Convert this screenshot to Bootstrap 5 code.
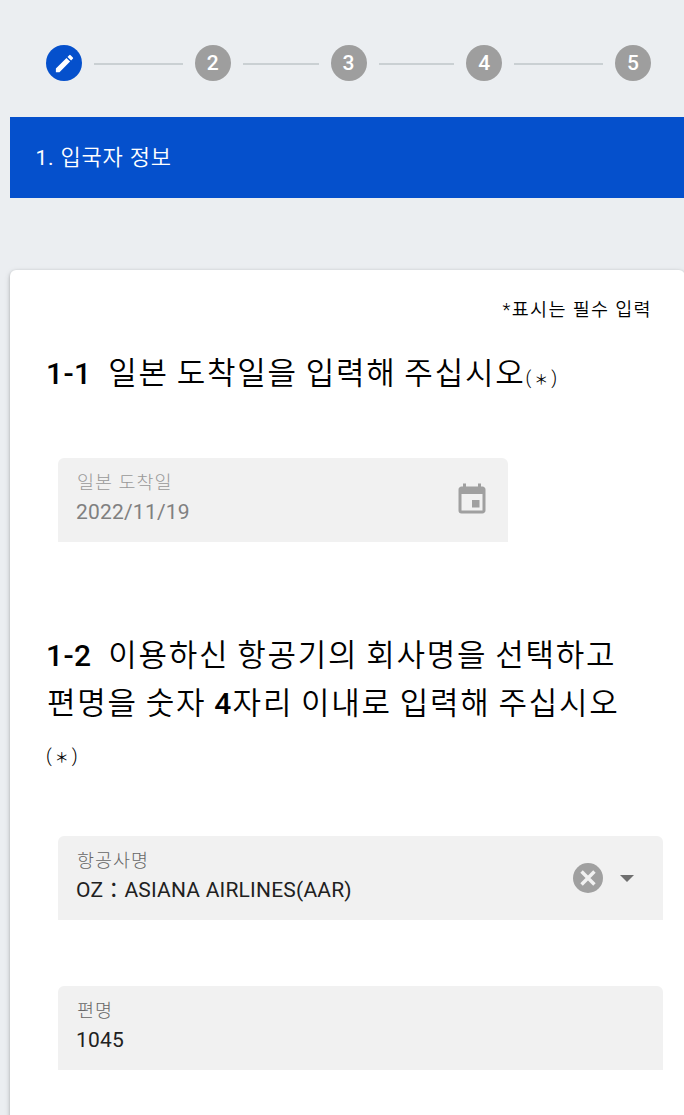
<!DOCTYPE html>
<html lang="ko">
<head>
<meta charset="utf-8">
<meta name="viewport" content="width=device-width, initial-scale=1">
<title>입국자 정보</title>
<link rel="stylesheet" href="https://cdn.jsdelivr.net/npm/bootstrap@5.3.0/dist/css/bootstrap.min.css">
<style>
  body { background: #ebeef1; font-family: Roboto, "Noto Sans CJK KR", sans-serif; color: #000; overflow: hidden; height: 1115px; }
  .steps { padding: 45px 33px 0 46px; height: 117px; }
  .step-dot { width: 36px; height: 36px; background: #9e9e9e; color: #fff; font-size: 21px; line-height: 36px; font-weight: 500; flex: none; }
  .step-dot.current { background: #0550cc; }
  .step-line { height: 2px; background: #cad0d3; margin: 1px 12px 0; flex: 76 1 0; }
  .step-line.wide { flex-grow: 89; }
  .title-bar { margin-left: 10px; height: 81px; padding: 0 25.5px; background: #0550cc; color: #fff; font-size: 21px; line-height: 81px; letter-spacing: .8px; }
  .title-bar span { font-size: 22px; font-weight: 350; }
  .form-panel { margin: 72px -1px 0 10px; height: 900px; border-radius: 6px; background: #fff; box-shadow: 0 3px 2px -2px rgba(0,0,0,.2), 0 1px 3px rgba(0,0,0,.22), 0 2px 6px rgba(0,0,0,.14); padding: 24px 22px 0 36px; }
  .required-note { height: 56px; line-height: 33px; font-size: 18.5px; font-weight: 350; letter-spacing: 1.35px; padding-right: 11px; }
  .question { font-size: 30px; line-height: 48px; letter-spacing: .4px; font-weight: 500; margin: 0 0 60px; white-space: nowrap; }
  .ko { font-size: 31px; font-weight: 350; letter-spacing: 1.75px; word-spacing: -1.4px; line-height: 1; margin-left: 1px; }
  .req { font-size: 18px; font-weight: 350; letter-spacing: 2px; line-height: 1; }
  .req i { font-style: normal; font-size: 14px; font-weight: 400; letter-spacing: 0; margin: 0 3px 0 1px; }
  .field { margin-left: 12px; height: 84px; width: 605px; background: #f1f1f1; border-radius: 6px 6px 0 0; padding: 12px 18px 0; color: #212121; }
  .field.short { width: 450px; color: #808080; }
  .field.last { margin-top: 66px; }
  .field-label { font-size: 18.5px; line-height: 27px; font-weight: 300; letter-spacing: 1px; color: #666; padding-left: 1px; }
  .short .field-label { color: #999; }
  .field-value { font-size: 21px; line-height: 31px; letter-spacing: .2px; }
  .calendar { margin-top: 12px; }
  .field-tools { height: 60px; gap: 14px; padding-right: 11px; }
  .second { margin-top: 90px; }
</style>
</head>
<body>
<header class="steps d-flex align-items-start">
  <div class="d-flex align-items-center w-100">
    <div class="step-dot current rounded-circle d-flex align-items-center justify-content-center">
      <svg width="23" height="23" viewBox="0 0 24 24" fill="#fff"><path d="M3 17.25V21h3.75L17.81 9.94l-3.75-3.75L3 17.25zM20.71 7.04a1 1 0 0 0 0-1.41l-2.34-2.34a1 1 0 0 0-1.41 0l-1.83 1.83 3.75 3.75 1.83-1.83z"/></svg>
    </div>
    <div class="step-line wide"></div>
    <div class="step-dot rounded-circle text-center">2</div>
    <div class="step-line"></div>
    <div class="step-dot rounded-circle text-center">3</div>
    <div class="step-line"></div>
    <div class="step-dot rounded-circle text-center">4</div>
    <div class="step-line wide"></div>
    <div class="step-dot rounded-circle text-center">5</div>
  </div>
</header>
<div class="title-bar">1. <span>입국자 정보</span></div>
<main class="form-panel">
  <div class="required-note text-end">*표시는 필수 입력</div>
  <section>
    <h2 class="question">1-1&nbsp; <span class="ko">일본 도착일을 입력해 주십시오</span><span class="req">(<i>＊</i>)</span></h2>
    <div class="field short d-flex justify-content-between">
      <div>
        <div class="field-label">일본 도착일</div>
        <div class="field-value">2022/11/19</div>
      </div>
      <svg class="calendar" width="36" height="36" viewBox="0 0 24 24" fill="#a0a0a0"><path d="M17 12h-5v5h5v-5zM16 1v2H8V1H6v2H5c-1.11 0-1.99.9-1.99 2L3 19a2 2 0 0 0 2 2h14c1.1 0 2-.9 2-2V5c0-1.1-.9-2-2-2h-1V1h-2zm3 18H5V8h14v11z"/></svg>
    </div>
  </section>
  <section class="second">
    <h2 class="question">1-2&nbsp; <span class="ko">이용하신 항공기의 회사명을 선택하고</span><br><span class="ko">편명을 숫자 </span>4<span class="ko">자리 이내로 입력해 주십시오</span><br><span class="req">(<i>＊</i>)</span></h2>
    <div class="field d-flex justify-content-between">
      <div>
        <div class="field-label">항공사명</div>
        <div class="field-value">OZ：ASIANA AIRLINES(AAR)</div>
      </div>
      <div class="field-tools d-flex align-items-center">
        <svg width="36" height="36" viewBox="0 0 24 24"><circle cx="12" cy="12" r="10" fill="#a0a0a0"/><path d="M7.7 7.7l8.6 8.6M16.3 7.7l-8.6 8.6" stroke="#f1f1f1" stroke-width="2.3"/></svg>
        <svg width="14" height="7" viewBox="0 0 14 7" fill="#6f6f6f"><path d="M0 0h14L7 7z"/></svg>
      </div>
    </div>
    <div class="field last">
      <div class="field-label">편명</div>
      <div class="field-value">1045</div>
    </div>
  </section>
</main>
<script src="https://cdn.jsdelivr.net/npm/bootstrap@5.3.0/dist/js/bootstrap.bundle.min.js"></script>
</body>
</html>
